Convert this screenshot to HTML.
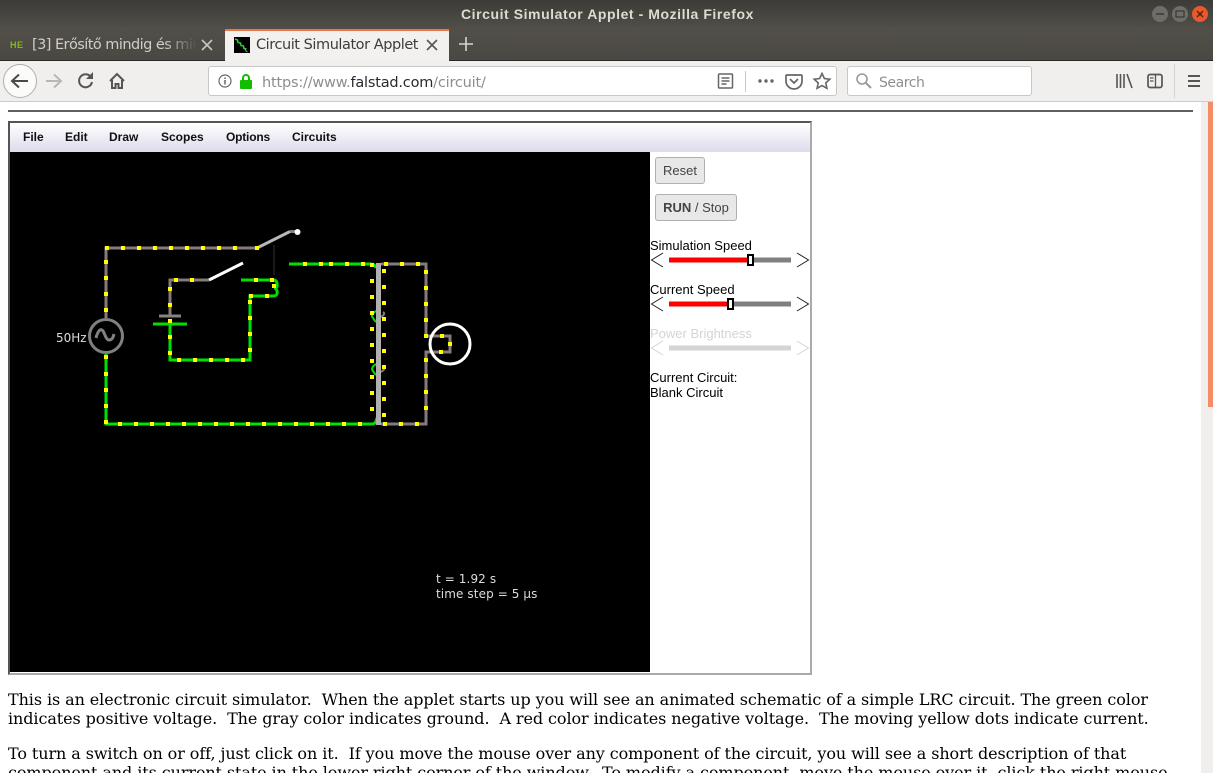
<!DOCTYPE html>
<html><head><meta charset="utf-8"><title>Circuit Simulator Applet</title>
<style>
html{margin:0;padding:0;width:1213px;height:773px;overflow:hidden;background:#fff}
body{margin:0;padding:0;width:1213px;height:773px;overflow:hidden;background:#fff;position:relative}
div,span,svg{position:absolute}
.t{white-space:pre;line-height:1}
.m{font:bold 12px "Liberation Sans",sans-serif;color:#111;top:130px;white-space:pre;line-height:14px}
.b{font:13px "Liberation Sans",sans-serif;color:#444;background:#e8e8e8;border:1px solid #b0b0b0;border-radius:3px;box-sizing:border-box;text-align:center;white-space:pre}
.l{font:13px/15px "Liberation Sans",sans-serif;color:#000;left:650px;white-space:pre}
.p{font:16px/19px "DejaVu Serif",serif;letter-spacing:-.085px;color:#000;left:8px;white-space:pre}
</style></head><body>
<div style="left:0;top:0;width:1213px;height:61px;background:linear-gradient(#3c3b37,#514f48 50%,#4a4842);border-bottom:1px solid #2a2926;box-sizing:border-box"></div>
<div class="t" style="left:461px;top:7px;font:bold 14px/14px 'Liberation Sans',sans-serif;letter-spacing:.56px;color:#dfdbd2">Circuit Simulator Applet - Mozilla Firefox</div>
<svg style="left:1150px;top:4px" width="60" height="20"><circle cx="10" cy="10" r="8" fill="#6e6d68"/><path d="M6 10h8" stroke="#3a3935" stroke-width="1.5"/><circle cx="30" cy="10" r="8" fill="#6e6d68"/><rect x="26" y="7" width="8" height="6" fill="none" stroke="#3a3935" stroke-width="1.2"/><circle cx="50" cy="10" r="8" fill="#e9592b"/><path d="M47 7l6 6M53 7l-6 6" stroke="#4a2010" stroke-width="1.3"/></svg>
<div class="t" style="left:10px;top:40px;font:bold 9px/10px 'Liberation Sans',sans-serif;color:#8ab51e;letter-spacing:.5px">HE</div>
<div class="t" style="left:32px;top:36px;width:165px;height:18px;overflow:hidden;font:14.5px/18px 'DejaVu Sans',sans-serif;letter-spacing:-.55px;color:#d0cec8;-webkit-mask-image:linear-gradient(90deg,#000 80%,transparent)">[3] Erősítő mindig és mindig</div>
<svg style="left:200px;top:38px" width="14" height="14"><path d="M2 2l10 10M12 2L2 12" stroke="#c8c6c0" stroke-width="1.6"/></svg>
<div style="left:225px;top:29px;width:224px;height:33px;background:#f2f1ef;border-top:2px solid #f0734a;box-sizing:border-box"></div>
<svg style="left:234px;top:37px" width="16" height="16"><rect width="16" height="16" fill="#000"/><path d="M1 2l2.500 1 .5 2.500 2.500.5.500 2.500 2.500.5.500 2.500 2.500.5" fill="none" stroke="#2fd32f" stroke-width="1.500"/><path d="M11 12l1 2 1.500 1" fill="none" stroke="#999" stroke-width="1"/></svg>
<div class="t" style="left:256px;top:36px;font:14.5px/18px 'DejaVu Sans',sans-serif;letter-spacing:-.45px;color:#3c3c3c">Circuit Simulator Applet</div>
<svg style="left:425px;top:38px" width="14" height="14"><path d="M2 2l10 10M12 2L2 12" stroke="#555" stroke-width="1.6"/></svg>
<svg style="left:458px;top:36px" width="16" height="16"><path d="M8 1v14M1 8h14" stroke="#d8d6d0" stroke-width="1.6"/></svg>
<div style="left:0;top:61px;width:1213px;height:41px;background:#f0efed;border-bottom:1px solid #cfcdca;box-sizing:border-box"></div>
<svg style="left:0;top:61px" width="210" height="40"><circle cx="20" cy="20" r="16.5" fill="#fbfbfa" stroke="#b0aeab"/><path d="M28 20H13M19 13.500l-7 6.500 7 6.500" fill="none" stroke="#4a4a4a" stroke-width="2"/><path d="M61 20H46M54 13.500l7 6.500-7 6.500" fill="none" stroke="#b8b7b5" stroke-width="2"/><path d="M91.500 17a6.500 6.500 0 1 0 .5 4" fill="none" stroke="#555" stroke-width="2"/><path d="M93 11v7h-7z" fill="#555"/><path d="M110 20l7-7 7 7M112 19v8h3.500v-4h3v4h3.500v-8" fill="none" stroke="#555" stroke-width="2"/></svg>
<div style="left:208px;top:66px;width:629px;height:30px;background:#fff;border:1px solid #c9c7c4;border-radius:3px;box-sizing:border-box"></div>
<svg style="left:215px;top:70px" width="42" height="22"><circle cx="10" cy="11" r="6" fill="none" stroke="#666" stroke-width="1.2"/><path d="M10 10v4.500M10 7.500v1.500" stroke="#666" stroke-width="1.500"/><rect x="25" y="10" width="12" height="9" rx="1" fill="#12bc00"/><path d="M28 10V8a3 3 0 0 1 6 0v2" fill="none" stroke="#12bc00" stroke-width="2"/></svg>
<div class="t" style="left:262px;top:74px;font:14.5px/18px 'DejaVu Sans',sans-serif;letter-spacing:-.2px;color:#8d8d8d">https://www.<span style="position:static;color:#2a2a2e">falstad.com</span>/circuit/</div>
<svg style="left:715px;top:70px" width="120" height="22"><path d="M4.500 4h12a1 1 0 0 1 1 1v12a1 1 0 0 1-1 1h-12a1 1 0 0 1-1-1v-12a1 1 0 0 1 1-1zM6.500 8h8M6.500 11h8M6.500 14h5" fill="none" stroke="#666" stroke-width="1.500"/><path d="M30.500 1v21" stroke="#c9c7c4"/><circle cx="45" cy="11" r="1.700" fill="#666"/><circle cx="51" cy="11" r="1.700" fill="#666"/><circle cx="57" cy="11" r="1.700" fill="#666"/><path d="M72 5h14a1 1 0 0 1 1 1v5a8 8 0 0 1-16 0v-5a1 1 0 0 1 1-1zM75 9l4 4 4-4" fill="none" stroke="#666" stroke-width="1.700"/><path d="M107 3.500l2.400 5 5.400.7-4 3.700 1.100 5.400-4.900-2.700-4.900 2.700 1.100-5.400-4-3.700 5.400-.7z" fill="none" stroke="#666" stroke-width="1.600"/></svg>
<div style="left:847px;top:66px;width:185px;height:30px;background:#fff;border:1px solid #c9c7c4;border-radius:3px;box-sizing:border-box"></div>
<svg style="left:855px;top:72px" width="18" height="18"><circle cx="7" cy="7" r="5" fill="none" stroke="#999" stroke-width="1.600"/><path d="M11 11l5 5" stroke="#999" stroke-width="2"/></svg>
<div class="t" style="left:879px;top:74px;font:14px/18px 'DejaVu Sans',sans-serif;letter-spacing:-.45px;color:#8f8f8f">Search</div>
<svg style="left:1110px;top:70px" width="90" height="22"><path d="M7 4v14M10.500 4v14M14 4v14M17 4l5 14" fill="none" stroke="#555" stroke-width="1.600"/><rect x="38" y="4.500" width="14" height="13" rx="2" fill="none" stroke="#555" stroke-width="1.700"/><path d="M45.500 4.500v13M40 8h3.500M40 11h3.500" stroke="#555" stroke-width="1.300"/><path d="M78 6h12M78 11h12M78 16h12" stroke="#555" stroke-width="2"/></svg>
<div style="left:1174px;top:64px;width:1px;height:34px;background:#d5d3d0"></div>

<div style="left:8px;top:110px;width:1185px;height:2px;background:#5f5f5f"></div>
<div style="left:1201px;top:102px;width:12px;height:671px;background:#f0efed"></div>
<div style="left:1208px;top:102px;width:5px;height:305px;background:#f48c66"></div>

<div style="left:8px;top:121px;width:804px;height:554px;box-sizing:border-box;border:2px solid;border-color:#555 #aaa #aaa #555;background:#fff"></div>
<div style="left:10px;top:123px;width:800px;height:29px;background:linear-gradient(#fff,#dcdcec)"></div>
<div class="m" style="left:23px">File</div><div class="m" style="left:65px">Edit</div><div class="m" style="left:109px">Draw</div><div class="m" style="left:161px">Scopes</div><div class="m" style="left:226px;letter-spacing:-.2px">Options</div><div class="m" style="left:292px">Circuits</div>
<div style="left:10px;top:152px;width:640px;height:520px;background:#000"></div>

<svg style="left:0;top:0" width="660" height="680" fill="none">
<g stroke="#857b7b" stroke-width="3">
<path d="M106 318V248H257"/><path d="M170 315V280H209"/><path d="M159 316H181" stroke="#8a8080"/>
<path d="M381 264H426V336H450V352H426V424H381"/>
<path d="M290 231.500H297"/>
<path d="M381 317q5-3 2-5M381 372q5-3 2-5" stroke-width="2"/>
</g>
<path d="M257 248L290 231.500" stroke="#b8b8b8" stroke-width="3"/>
<path d="M209 280L243 263" stroke="#fff" stroke-width="3"/>
<circle cx="297.500" cy="232" r="3" fill="#fff"/>
<path d="M274 245V275" stroke="#222" stroke-width="1.500"/>
<g stroke="#00e000" stroke-width="3">
<path d="M106 354V424H372Q376 424 377 418"/>
<path d="M153 324H187"/><path d="M170 324V360H250V296H273Q278 296 277 291Q276 288 274 288Q278 288 277 284Q277 280 273 280H241"/>
<path d="M289 264H371Q375 264 376 268"/>
<path d="M376 311Q370 315 373 318Q374 320 376 322M376 364Q370 368 373 371Q374 373 376 375" stroke-width="2"/>
</g>
<rect x="376" y="263" width="5" height="162" fill="#b0b0b0"/>
<circle cx="106" cy="336" r="16.500" stroke="#808080" stroke-width="3"/>
<path d="M96 338c2-8 5-10 7-7s3 9 6 9 4-2 5-6" stroke="#808080" stroke-width="3"/>
<circle cx="450" cy="344" r="20" stroke="#fff" stroke-width="3"/>
<path stroke="#ff0" stroke-width="4" d="M105 248h4M121 248h4M137 248h4M153 248h4M169 248h4M185 248h4M201 248h4M217 248h4M233 248h4M255 248h4M104 262h4M104 278h4M104 294h4M104 310h4M104 357h4M104 374h4M104 390h4M104 406h4M104 422h4M118 424h4M134 424h4M150 424h4M166 424h4M182 424h4M198 424h4M214 424h4M230 424h4M246 424h4M262 424h4M278 424h4M294 424h4M310 424h4M326 424h4M342 424h4M358 424h4M174 280h4M190 280h4M168 289h4M168 305h4M168 321h4M168 337h4M168 353h4M177 360h4M193 360h4M209 360h4M225 360h4M241 360h4M248 350h4M248 334h4M248 318h4M248 302h4M249 296h4M265 296h4M272 286h4M254 280h4M270 280h4M303 264h4M319 264h4M329 264h4M345 264h4M361 264h4M370 265h4M370 281h4M370 297h4M370 313h4M370 329h4M370 345h4M370 361h4M370 377h4M370 393h4M370 409h4M382 271h4M382 287h4M382 303h4M382 319h4M382 335h4M382 351h4M382 367h4M382 383h4M382 399h4M382 415h4M384 264h4M400 264h4M416 264h4M424 272h4M424 288h4M424 304h4M424 320h4M424 336h4M424 360h4M424 376h4M424 392h4M424 408h4M440 336h4M448 344h4M439 352h4M383 424h4M399 424h4M415 424h4"/>
</svg>
<div class="t" style="left:56px;top:331px;font:12px/14px 'DejaVu Sans',sans-serif;color:#ddd">50Hz</div>
<div class="t" style="left:436px;top:572px;font:12px/15px 'DejaVu Sans',sans-serif;letter-spacing:.1px;color:#ddd">t = 1.92 s
time step = 5 µs</div>

<div class="b" style="left:655px;top:157px;width:50px;height:27px;line-height:25px">Reset</div>
<div class="b" style="left:655px;top:194px;width:82px;height:27px;line-height:25px"><b>RUN</b> / Stop</div>
<div class="l" style="top:238px">Simulation Speed</div>
<div class="l" style="top:282px">Current Speed</div>
<div class="l" style="top:326px;color:#d4d4d4">Power Brightness</div>
<div class="l" style="top:370px">Current Circuit:
Blank Circuit</div>
<svg style="left:650px;top:250px" width="160" height="110" fill="none">
<g stroke="#222" stroke-width="1"><path d="M13 3L1.500 10 13 17M147 3l11.500 7L147 17M13 47L1.500 54 13 61M147 47l11.500 7L147 61"/></g>
<path d="M13 91L1.500 98 13 105M147 91l11.500 7L147 105" stroke="#d4d4d4"/>
<path d="M19 10H100" stroke="#f00" stroke-width="5"/><path d="M100 10H141" stroke="#808080" stroke-width="5"/>
<path d="M19 54H80" stroke="#f00" stroke-width="5"/><path d="M80 54H141" stroke="#808080" stroke-width="5"/>
<path d="M19 98H141" stroke="#d4d4d4" stroke-width="5"/>
<rect x="98" y="5" width="5" height="10" fill="#fff" stroke="#000" stroke-width="2"/>
<rect x="78" y="49" width="5" height="10" fill="#fff" stroke="#000" stroke-width="2"/>
</svg>

<div class="p" style="top:690px">This is an electronic circuit simulator.  When the applet starts up you will see an animated schematic of a simple LRC circuit. The green color
indicates positive voltage.  The gray color indicates ground.  A red color indicates negative voltage.  The moving yellow dots indicate current.</div>
<div class="p" style="top:744px">To turn a switch on or off, just click on it.  If you move the mouse over any component of the circuit, you will see a short description of that
component and its current state in the lower right corner of the window.  To modify a component, move the mouse over it, click the right mouse</div>
</body></html>
